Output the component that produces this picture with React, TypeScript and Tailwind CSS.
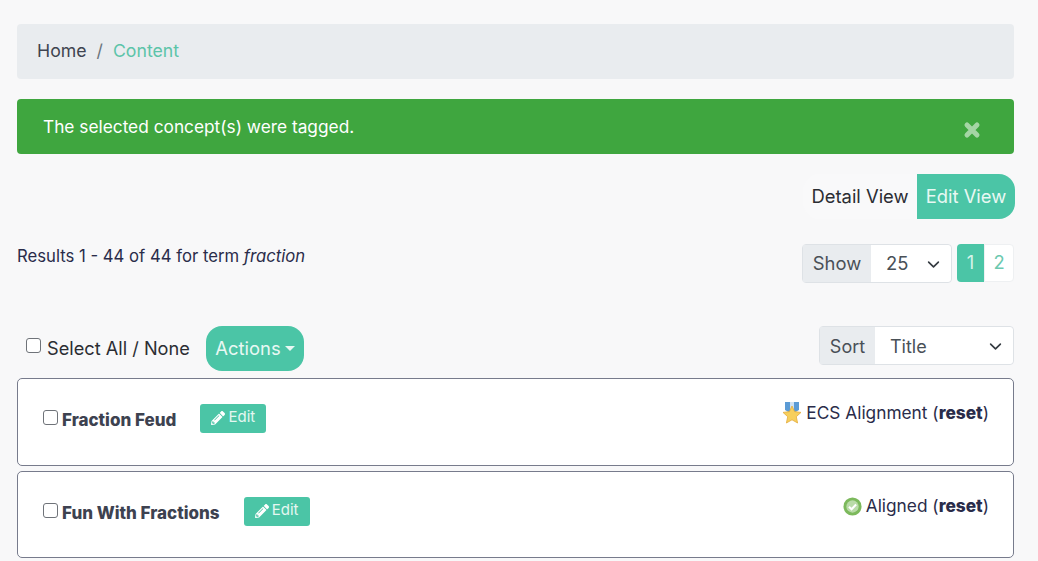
import { FaPencilAlt } from 'react-icons/fa';
import { FunctionComponent, ReactNode } from 'react';

const Chevron: FunctionComponent = () => (
  <svg viewBox="0 0 16 16" className="h-[13px] w-[13px]" fill="none" stroke="#343a40" strokeWidth="2" strokeLinecap="round" strokeLinejoin="round">
    <path d="M2 5l6 6 6-6" />
  </svg>
);

const CloseX: FunctionComponent = () => (
  <svg viewBox="0 0 18 18" className="mt-[6px] h-[18px] w-[18px]" fill="none" stroke="#a5d5a5" strokeWidth="5" strokeLinecap="round">
    <path d="M4 4l10 10M14 4L4 14" />
  </svg>
);

const Medal: FunctionComponent = () => (
  <svg viewBox="0 0 20 22" className="h-[22px] w-[20px]">
    <path d="M3 0h14v8l-7 4-7-4z" fill="#5b9bd5" />
    <path d="M8 0h4v8H8z" fill="#cfe2f3" />
    <path d="M10 4l2.600 5.600 6.400.8-4.700 4.300 1.300 6.300-5.600-3.200-5.600 3.200 1.300-6.300L1 10.400l6.400-.8z" fill="#f7cf5c" stroke="#e3ac3c" strokeWidth="0.8" />
  </svg>
);

const Check: FunctionComponent = () => (
  <svg viewBox="0 0 20 20" className="h-[19px] w-[19px]">
    <circle cx="10" cy="10" r="9.500" fill="#7cb95c" />
    <circle cx="10" cy="10" r="6.500" fill="#b9dba8" />
    <path d="M6.300 10.200l2.700 2.700 4.800-5" fill="none" stroke="#fff" strokeWidth="2.200" />
  </svg>
);

const Box: FunctionComponent<{ className?: string }> = ({ className }) => (
  <input type="checkbox" className={`h-[15px] w-[15px] appearance-none rounded-[3px] border border-[#6f7379] bg-white ${className ?? ''}`} />
);

const InputGroup: FunctionComponent<{ label: string; value: string; className: string; labelClass: string }> = ({ label, value, className, labelClass }) => (
  <div className={`flex rounded border border-[#dee2e6] text-[#495057] ${className}`}>
    <span className={`flex items-center justify-center bg-[#e9ecef] pt-[1px] ${labelClass}`}>{label}</span>
    <div className="flex flex-1 items-center justify-between rounded-r bg-white pt-[1px] pr-[11px] pl-[15px]">
      <span>{value}</span>
      <Chevron />
    </div>
  </div>
);

const Row: FunctionComponent<{ title: string; status: ReactNode; label: string; h: string }> = ({ title, status, label, h }) => (
  <div className={`flex items-start justify-between rounded-[5px] border border-[#777b8c] bg-white pr-[24px] pl-[25px] ${h}`}>
    <div className="flex items-start pt-[25px]">
      <Box className="mt-[6px] mr-[4px]" />
      <span className="pt-[2px] text-[17px] leading-[29px] font-extrabold text-[#3d4250]">{title}</span>
      <button className="ml-[24px] flex h-[29px] w-[66px] items-center justify-center gap-[3px] rounded-[3px] bg-[#4bc5a6] pb-[2px] text-[15px] text-[#e4f7f1]">
        <FaPencilAlt className="h-[14px] w-[14px] text-white" />
        Edit
      </button>
    </div>
    <div className="flex items-center gap-[4px] pt-[20px] text-[17.300px] leading-[28px] text-[#2a2c4a]">
      {status}
      <span>
        {label} (<b className="font-extrabold">reset</b>)
      </span>
    </div>
  </div>
);

const App: FunctionComponent = () => (
  <div className="h-[561px] w-[1038px] overflow-hidden bg-[#f8f8f9] pt-[24px] pr-[24px] pl-[17px] [font-family:'Inter','Liberation_Sans',sans-serif]">
    <div className="flex h-[55px] items-center rounded bg-[#e9ecef] pb-[1px] pl-[20px] text-[17.700px] text-[#3f4450]">
      <span>Home</span>
      <span className="mx-[10px] text-[#6c757d]">/</span>
      <span className="text-[#5cc4a9]">Content</span>
    </div>

    <div className="mt-[20px] flex h-[55px] items-center justify-between rounded bg-[#3fa63f] pr-[33px] pl-[26px] text-[17.300px] text-white">
      <span>The selected concept(s) were tagged.</span>
      <CloseX />
    </div>

    <div className="mt-[20px] -mr-[1px] flex h-[45px] justify-end text-[18.400px]">
      <span className="flex w-[114px] items-center justify-center rounded-l-[16px] bg-[#f9f9fa] pt-[1px] text-[#2b2d33]">Detail View</span>
      <span className="flex w-[98px] items-center justify-center rounded-r-[16px] bg-[#4bc5a6] pt-[1px] text-[#e8f8f3]">Edit View</span>
    </div>

    <div className="mt-[25px] flex h-[39px] justify-between">
      <span className="text-[16.700px] leading-[25px] text-[#2a2c4a]">
        Results 1 - 44 of 44 for term <i>fraction</i>
      </span>
      <div className="flex">
        <InputGroup label="Show" value="25" className="h-[39px] w-[150px] text-[18.400px]" labelClass="w-[68px]" />
        <div className="ml-[5px] flex h-[38px] text-[18.400px]">
          <span className="flex w-[27px] items-center justify-center rounded-l bg-[#4bc5a6] text-[#d8f3ea]">1</span>
          <span className="flex w-[30px] items-center justify-center rounded-r border border-[#eef0f2] bg-white text-[#6cc9b0]">2</span>
        </div>
      </div>
    </div>

    <div className="mt-[43px] flex h-[46px] items-start justify-between">
      <div className="flex items-center pl-[9px]">
        <Box className="mr-[6px] -translate-y-[3px]" />
        <span className="w-[143px] text-[18.200px] whitespace-nowrap text-[#2b2d33]">Select All / None</span>
        <button className="ml-[16px] flex h-[45px] w-[98px] items-center justify-center gap-[4px] rounded-[16px] bg-[#4bc5a6] text-[18.400px] text-[#e8f8f3]">
          Actions
          <span className="h-0 w-0 border-x-[5px] border-t-[5px] border-x-transparent border-t-[#e8f8f3]" />
        </button>
      </div>
      <InputGroup label="Sort" value="Title" className="h-[39px] w-[195px] text-[18px]" labelClass="w-[55px]" />
    </div>

    <div className="mt-[6px] flex flex-col gap-[5px]">
      <Row title="Fraction Feud" status={<Medal />} label="ECS Alignment" h="h-[88px]" />
      <Row title="Fun With Fractions" status={<Check />} label="Aligned" h="h-[87px]" />
    </div>
  </div>
);

export default App;
